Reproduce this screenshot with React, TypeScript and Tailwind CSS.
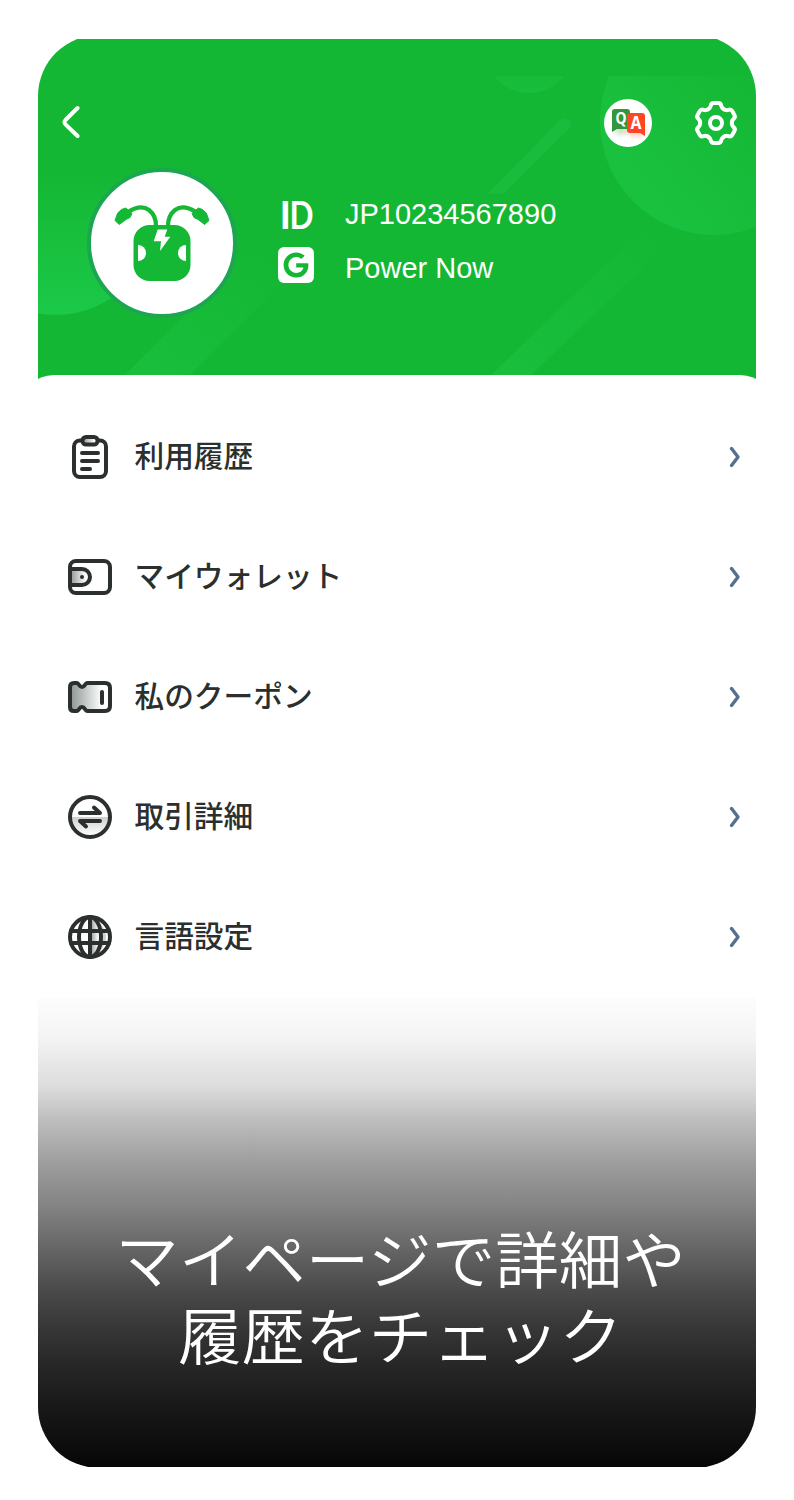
import type { ReactNode } from "react";
import { FaGoogle } from "react-icons/fa";

const INK = "#2b2f2d";

const HeaderBackground = () => (
  <svg className="absolute inset-0" width="718" height="344" viewBox="38 35 718 344">
    <defs>
      <linearGradient id="orbLeft" x1="0" y1="0" x2="0" y2="1">
        <stop offset="0.3" stopColor="#1fd052" stopOpacity="0" />
        <stop offset="1" stopColor="#1fd052" stopOpacity="0.7" />
      </linearGradient>
      <linearGradient id="orbRight" x1="0.2" y1="0.8" x2="0.75" y2="0.35">
        <stop offset="0" stopColor="#1fcb4c" stopOpacity="0.5" />
        <stop offset="1" stopColor="#1fcb4c" stopOpacity="0" />
      </linearGradient>
      <linearGradient id="orbTop" x1="0" y1="0" x2="0" y2="1">
        <stop offset="0.3" stopColor="#1fcb4c" stopOpacity="0" />
        <stop offset="1" stopColor="#1fcb4c" stopOpacity="0.35" />
      </linearGradient>
      <linearGradient id="beam" x1="1" y1="0" x2="0" y2="1">
        <stop offset="0.1" stopColor="#1fcb4c" stopOpacity="0" />
        <stop offset="1" stopColor="#1fcb4c" stopOpacity="0.4" />
      </linearGradient>
      <clipPath id="belowStatusBar">
        <rect x="38" y="76" width="718" height="303" />
      </clipPath>
    </defs>
    <circle cx="55" cy="213" r="102" fill="url(#orbLeft)" />
    <g clipPath="url(#belowStatusBar)">
      <circle cx="714" cy="121" r="114" fill="url(#orbRight)" />
    </g>
    <circle cx="529" cy="49" r="44" fill="url(#orbTop)" clipPath="url(#belowStatusBar)" />
    <path d="M125 375L245 255L310 255L190 375Z" fill="url(#beam)" />
    <path d="M491 375L650 222L690 222L531 375Z" fill="url(#beam)" />
    <path d="M487 194L560 120a6 6 0 0 1 9 9L503 194Z" fill="#22c751" fillOpacity="0.35" />
  </svg>
);

const BackIcon = () => (
  <svg width="20" height="34" viewBox="0 0 20 34" fill="none" stroke="#fff" strokeWidth="4" strokeLinecap="round">
    <path d="M16.500 3L4.500 15Q2.500 17.200 4.500 19.400L16.500 31" />
  </svg>
);

const GearIcon = () => (
  <svg width="48" height="48" viewBox="-24 -24 48 48" fill="none" stroke="#fff" strokeWidth="4" strokeLinecap="round" strokeLinejoin="round">
    {[0, 60, 120, 180, 240, 300].map((angle) => (
      <path
        key={angle}
        d="M-7.900 -13.700Q-5.600 -15 -5.200 -17.300Q-4.800 -20 -2.200 -20H2.200Q4.800 -20 5.200 -17.300Q5.600 -15 7.900 -13.700"
        transform={`rotate(${angle})`}
      />
    ))}
    <circle r="6" />
  </svg>
);

const QaIcon = () => (
  <svg width="48" height="48" viewBox="0 0 48 48">
    <defs>
      <radialGradient id="qaGlow">
        <stop offset="0" stopColor="#ff4a22" stopOpacity="0.35" />
        <stop offset="1" stopColor="#ff4a22" stopOpacity="0" />
      </radialGradient>
      <radialGradient id="qaShade">
        <stop offset="0" stopColor="#33963a" stopOpacity="0.3" />
        <stop offset="1" stopColor="#33963a" stopOpacity="0" />
      </radialGradient>
    </defs>
    <circle cx="24" cy="24" r="24" fill="#fff" />
    <ellipse cx="17" cy="31" rx="10" ry="8" fill="url(#qaShade)" />
    <ellipse cx="32" cy="32" rx="13" ry="9" fill="url(#qaGlow)" />
    <path d="M8 13q0-3 3-3h12q3 0 3 3v17H13l-5 3z" fill="#33963a" />
    <path d="M23 17q0-3 3-3h12q3 0 3 3v20l-5-3H26q-3 0-3-3z" fill="#ff4622" />
    <text x="17" y="24.500" fontSize="16" fontWeight="700" textAnchor="middle" fill="#fff" fontFamily="Noto Sans, sans-serif" textLength="11" lengthAdjust="spacingAndGlyphs">
      Q
    </text>
    <text x="32" y="30" fontSize="17" fontWeight="700" textAnchor="middle" fill="#fff" fontFamily="Noto Sans, sans-serif" textLength="11" lengthAdjust="spacingAndGlyphs">
      A
    </text>
  </svg>
);

const Avatar = () => (
  <svg width="152" height="152" viewBox="86 167 152 152">
    <circle cx="162" cy="243" r="73" fill="#fff" stroke="#1ca652" strokeWidth="4" />
    <g fill="none" stroke="#14b834" strokeWidth="4.200">
      <path d="M128 212C139 205 145 207 149 210C154 214 156 219 156 226" />
      <path d="M196 212C185 205 179 207 175 210C170 214 168 219 168 226" />
    </g>
    <g fill="#14b834" stroke="#14b834" strokeWidth="1" strokeLinejoin="round">
      <path d="M125.700 208L132 213.500L130 217.500L126 219.500L119.300 224.500L115 220.500L117.700 213L121.500 209.500Z" />
      <path d="M198.300 208L192 213.500L194 217.500L198 219.500L204.700 224.500L209 220.500L206.300 213L202.500 209.500Z" />
    </g>
    <rect x="133.500" y="225" width="57" height="56" rx="16" fill="#14b834" />
    <g fill="#fff">
      <path d="M157.700 229.500H167.300L164.700 236.700H170.300L160 251L161 241.300H153.700Z" />
      <path d="M138 245A8 8 0 0 1 138 261Z" />
      <path d="M186 245A8 8 0 0 0 186 261Z" />
    </g>
  </svg>
);

const IdMark = () => (
  <svg className="overflow-visible" width="36" height="36" viewBox="0 0 36 36" fill="#fff" fontFamily="Lato, sans-serif" fontSize="39" fontWeight="700">
    <text x="1.500" y="32.500">
      I
    </text>
    <text x="11.500" y="32.500" textLength="24" lengthAdjust="spacingAndGlyphs">
      D
    </text>
  </svg>
);

const IconFrame = ({ children }: { children: ReactNode }) => (
  <svg width="44" height="44" viewBox="0 0 44 44" fill="none" stroke={INK} strokeWidth="4" strokeLinecap="round" strokeLinejoin="round">
    <defs>
      <linearGradient id="fade">
        <stop offset="0" stopColor="#8c9492" />
        <stop offset="0.8" stopColor="#fff" />
      </linearGradient>
      <linearGradient id="fadeDown" x1="0" y1="0" x2="0" y2="1">
        <stop offset="0" stopColor="#cdd0cf" />
        <stop offset="1" stopColor="#fff" />
      </linearGradient>
    </defs>
    {children}
  </svg>
);

const HistoryIcon = () => (
  <IconFrame>
    <rect x="6" y="5.500" width="32" height="36.500" rx="6" />
    <rect x="14.500" y="2" width="15" height="7.500" rx="3.500" fill="url(#fade)" />
    <path d="M14 18H30M14 26H30M14 34H22" />
  </IconFrame>
);

const WalletIcon = () => (
  <IconFrame>
    <path d="M2 14H14a8 8 0 0 1 0 16H2Z" fill="url(#fade)" />
    <rect x="2" y="6" width="40" height="32" rx="6" />
    <circle cx="14" cy="22" r="2" fill={INK} stroke="none" />
  </IconFrame>
);

const CouponIcon = () => (
  <IconFrame>
    <path
      d="M6 8H9C11 8 11 12 14 12S17 8 19 8H37Q42 8 42 13V31Q42 36 37 36H19C17 36 17 32 14 32S11 36 9 36H6Q2 36 2 32V12Q2 8 6 8Z"
      fill="url(#fade)"
    />
    <path d="M34 17V28" />
  </IconFrame>
);

const TransferIcon = () => (
  <IconFrame>
    <path d="M3 22H41A19 19 0 0 1 3 22Z" fill="url(#fadeDown)" stroke="none" />
    <circle cx="22" cy="22" r="20" />
    <path d="M12 18H32L26 12.500M32 26H12L18 31.500" />
  </IconFrame>
);

const LanguageIcon = () => (
  <IconFrame>
    <path d="M22 2a10.500 20 0 0 1 0 40Z" fill="url(#fade)" stroke="none" />
    <path d="M32 8Q38 15 38 22T32 36Q38 22 32 8Z" fill="#cdd0cf" stroke="none" />
    <circle cx="22" cy="22" r="20" />
    <ellipse cx="22" cy="22" rx="11" ry="20" />
    <path d="M22 2V42M3 16H41M3 28H41" />
  </IconFrame>
);

const ChevronIcon = () => (
  <svg width="12" height="22" viewBox="0 0 12 22" fill="none" stroke="#54708e" strokeWidth="3.400" strokeLinecap="round" strokeLinejoin="round">
    <path d="M2.500 2.500L9 11L2.500 19.500" />
  </svg>
);

const menuItems = [
  { label: "利用履歴", icon: <HistoryIcon /> },
  { label: "マイウォレット", icon: <WalletIcon /> },
  { label: "私のクーポン", icon: <CouponIcon /> },
  { label: "取引詳細", icon: <TransferIcon /> },
  { label: "言語設定", icon: <LanguageIcon /> },
];

const ProfileHeader = () => (
  <header className="relative h-[344px] shrink-0 bg-[#14b733]">
    <HeaderBackground />
    <div className="relative flex h-12 translate-y-16 items-center pr-4 pl-[23px]">
      <button aria-label="戻る" className="-mt-0.5">
        <BackIcon />
      </button>
      <div className="ml-auto flex items-center gap-10">
        <QaIcon />
        <GearIcon />
      </div>
    </div>
    <div className="relative mt-[84px] flex pl-12">
      <Avatar />
      <div className="ml-10 flex flex-col gap-[14px] pt-[27px] font-['Liberation_Sans',Arial,sans-serif] text-[29px] leading-10 text-white">
        <div className="flex items-center gap-[31px]">
          <IdMark />
          <span>JP10234567890</span>
        </div>
        <div className="flex items-center gap-[31px]">
          <span className="-mt-1.5 flex h-9 w-9 items-center justify-center rounded-md bg-white">
            <FaGoogle size={26} color="#14b733" />
          </span>
          <span>Power Now</span>
        </div>
      </div>
    </div>
  </header>
);

const App = () => {
  return (
    <div className="h-[1500px] w-[794px] bg-white px-[38px] pt-[39px]">
      <main className="h-[1428px] overflow-hidden">
        <div className="-mt-1 flex h-[1433px] flex-col overflow-hidden rounded-[61px]">
          <ProfileHeader />
          <nav className="relative -mx-[18px] -mt-1 rounded-t-[34px] bg-white px-[18px] pt-[22px] font-['Noto_Sans_CJK_JP',sans-serif] text-[29.700px] font-medium text-[#2b2f2d]">
            {menuItems.map((item) => (
              <a key={item.label} className="flex h-[120px] items-center pr-[15px] pl-[30px]">
                {item.icon}
                <span className="-mt-[3px] ml-[22.500px]">{item.label}</span>
                <span className="ml-auto">
                  <ChevronIcon />
                </span>
              </a>
            ))}
          </nav>
          <section className="flex flex-1 flex-col bg-linear-[180deg,#fdfdfd_0px,#f4f4f4_40px,#dcdcdc_90px,#bcbcbc_125px,#9e9e9e_165px,#848484_208px,#686868_248px,#4c4c4c_290px,#383838_328px,#262626_370px,#191919_408px,#0e0e0e_445px,#060606_470px] pt-[222px] pl-[7px] text-center font-['Noto_Sans_CJK_JP',sans-serif] text-[62px] leading-[76px] font-[350] text-white">
            <div className="scale-x-[1.025]">
              <p>マイページで詳細や</p>
              <p>履歴をチェック</p>
            </div>
          </section>
        </div>
      </main>
    </div>
  );
};

export default App;
